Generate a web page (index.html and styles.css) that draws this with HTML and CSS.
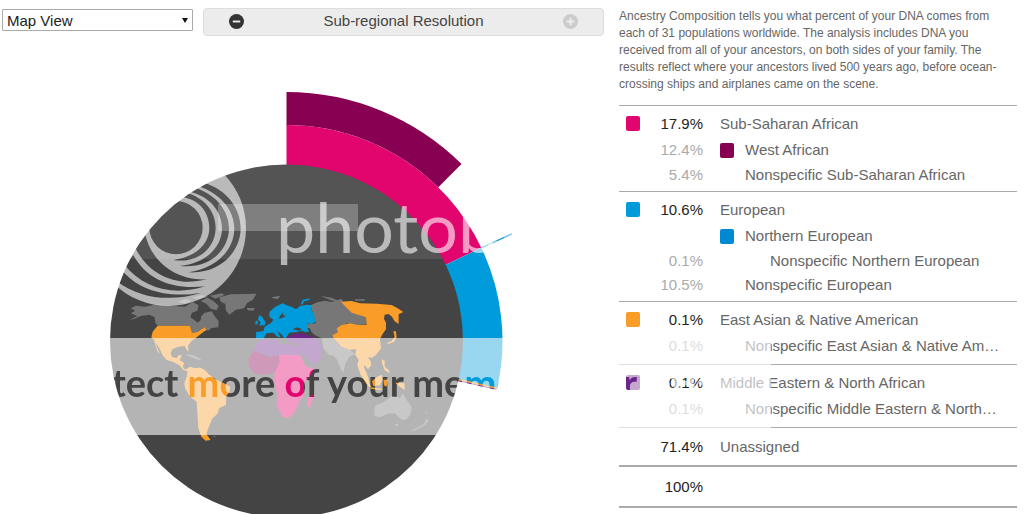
FILE: index.html
```html
<!DOCTYPE html>
<html lang="en">

<head>
    <meta charset="UTF-8">
    <meta name="viewport" content="width=device-width, initial-scale=1.0">
    <title>Ancestry Composition</title>
    <link rel="stylesheet" href="styles.css">
</head>

<body>
    <div class="page">
        <div class="chart">
            <div class="toolbar">
                <select class="view" aria-label="View">
                    <option>Map View</option>
                </select>
                <div class="resolution">
                    <button type="button" aria-label="Less detail">
                        <svg viewBox="0 0 16 16"><circle cx="8" cy="8" r="8" fill="#333" /><path d="M4 8h8" /></svg>
                    </button>
                    <span>Sub-regional Resolution</span>
                    <button type="button" aria-label="More detail" disabled>
                        <svg viewBox="0 0 16 16"><circle cx="8" cy="8" r="8" fill="#ccc" /><path d="M4 8h8M8 4v8" /></svg>
                    </button>
                </div>
            </div>

            <svg class="map" viewBox="0 36 604 478">
                <!-- ring -->
                <path fill="#e2056e" d="M286.500 125A216 216 0 0 1 481.300 247.700L445.200 265L286.500 341Z" />
                <path fill="#870052" d="M286.500 92A249 249 0 0 1 461.500 163.900L438.300 187.300A216 216 0 0 0 286.500 125Z" />
                <path fill="#009bdb" d="M481.300 247.700A216 216 0 0 1 497.300 388L286.500 341Z" />
                <path stroke="#1593d2" stroke-width="1.300" d="M481 248l30.500-14" />
                <path stroke="#99d3ef" stroke-width="1.300" d="M488 245l9-4M504 237.500l8-3.700" />
                <path stroke="#f99d28" stroke-width="1.500" d="M458 379.500l39 8.700" />
                <path stroke="#6b2488" stroke-width="1" d="M458 380.700l38.500 8.700" />
                <circle cx="286.500" cy="341" r="176.500" fill="#444" />

                <!-- world map -->
                <g transform="translate(110 280) scale(.3333)">
                    <g fill="#777">
                        <path d="M58 120L82 108 62 100 76 92 62 85 78 77 105 80 140 73 190 78 225 80 248 66 266 76 262 92 246 98 241 112 252 119 263 128 272 120 274 108 284 98 306 94 312 106 326 124 325 142 304 144 298 151 290 152 285 141 262 156 246 158 240 137 143 137 136 128 134 112 118 104 92 108 74 116Z" />
                        <path d="M205 65l22-8 18 5-20 9zM244 54l30-9 20 5-24 7zM272 63l20-10 18 10 16 14-6 14-18-5-12-14zM300 47l34-7 10 4-28 12z" />
                        <path d="M328 52L362 43 440 41 428 60 412 68 402 85 378 89 358 104 348 92 346 72 332 65ZM410 84l24 0-4 8-17-1zM484 52l28-5-10 11-12-3z" />
                        <path d="M602 76L622 67 645 62 665 66 695 56 706 80 725 96 768 112 770 132 745 135 712 130 686 140 684 155 670 165 670 175 640 176 615 166 604 155 600 145 588 144 592 132 618 130 610 105ZM632 48l32 5 22 9-20 0zM734 58l32 0-2 4-28 0z" />
                        <path d="M636 176L670 174 694 200 720 210 737 223 720 228 706 250 700 278 692 266 682 240 672 228 658 225 640 205Z" />
                        <path d="M792 406L795 378 822 366 845 348 864 350 870 356 878 340 892 362 905 382 902 402 890 418 876 420 854 400 832 402 808 412ZM854 432l12-1-5 9zM904 452l38-20 8-18 6 8-12 14-36 18zM940 392l14 8-3 2zM224 222l28 4 22 12-4 3-26-9zM308 468l10 1-4 3z" />
                    </g>
                    <g fill="#f99d28">
                        <path d="M143 137L240 137 246 158 262 156 285 141 289 150 275 160 258 173 244 184 234 197 236 215 229 208 224 198 205 200 188 207 182 218 185 230 200 235 205 226 216 226 209 241 222 248 219 262 226 269 240 260 254 264 272 263 284 270 298 284 320 300 342 310 361 320 358 336 349 348 348 375 328 384 322 402 308 414 300 432 294 447 289 462 302 480 287 482 274 470 265 445 263 410 260 365 240 350 225 325 223 310 230 290 233 274 220 270 208 256 190 246 170 240 158 226 148 205 138 188 142 204 150 222 142 214 132 180 124 172 128 155Z" />
                        <path d="M693 65L725 63 750 70 800 71 845 75 862 84 880 96 866 103 866 132 854 124 846 110 836 102 824 104 822 116 828 128 828 148 818 162 810 177 813 205 798 225 785 234 774 230 782 244 784 256 774 268 764 256 762 262 774 290 780 318 768 310 752 284 742 255 746 240 736 224 738 207 720 210 694 200 684 188 670 175 668 165 684 156 680 145 695 135 720 130 745 135 770 134 768 112 725 98 708 82Z" />
                        <path d="M830 190l16-8 8-12-4-16 8 0 2 18-8 14-18 6zM754 284l16 14 14 22-6 2zM786 304l16-14 14-6 2 14-8 18-20 2zM820 300l14-2-4 22-8-4zM855 308l28 2 2 20-16-10zM816 238l8 4 0 18 14 12 0 8-14-10-8-20zM782 322l34 4-4 4-30-4z" />
                    </g>
                    <g fill="#009bdb">
                        <path d="M464 140L484 128 490 119 478 110 478 96 496 80 518 70 530 76 544 80 558 88 570 78 592 74 604 76 604 88 612 104 616 126 604 132 592 130 590 142 598 154 588 157 574 152 560 156 538 158 532 168 524 176 514 162 502 154 512 172 504 172 490 158 470 160 460 176 438 176 438 156 460 154Z" />
                        <path d="M447 106l8 3 12 18-2 8-18 2 5-10-8-8zM437 122l7 0-1 10-7 3zM572 72l6-12 22-5-3 6-14 3-7 10z" />
                        <path fill="#444" d="M510 108l10-12-1 9 9 3-10 5-12 4zM548 148l12-6 16 5-8 5z" />
                    </g>
                    <path fill="#6b2488" d="M534 171L560 159 590 164 608 172 624 177 638 206 630 218 636 234 612 256 596 240 580 220 568 204 572 192 545 190 530 180ZM448 180L496 178 512 194 534 192 570 198 578 228 510 224 482 232 456 222 430 212Z" />
                    <path fill="#870052" d="M430 212L456 222 480 232 508 225 508 250 498 274 484 280 452 284 430 278 416 256 415 236Z" />
                    <path fill="#e2056e" d="M508 224L572 226 582 250 596 264 613 262 606 280 582 308 582 345 564 372 556 396 540 412 520 414 512 400 499 375 502 345 492 300 494 278 508 250ZM590 378l2-22 16-12 2 12-12 27z" />
                </g>
            </svg>
        </div>

        <div class="summary">
            <p>Ancestry Composition tells you what percent of your DNA comes from each of 31 populations worldwide. The analysis includes DNA you received from all of your ancestors, on both sides of your family. The results reflect where your ancestors lived 500 years ago, before ocean-crossing ships and airplanes came on the scene.</p>

            <table>
                <tbody>
                    <tr class="first">
                        <td class="key"><span class="swatch african"></span></td>
                        <td class="percent">17.9%</td>
                        <td>Sub-Saharan African</td>
                    </tr>
                    <tr class="sub">
                        <td></td>
                        <td class="percent">12.4%</td>
                        <td><span class="swatch west"></span>West African</td>
                    </tr>
                    <tr class="sub plain last">
                        <td></td>
                        <td class="percent">5.4%</td>
                        <td class="indent">Nonspecific Sub-Saharan African</td>
                    </tr>
                </tbody>
                <tbody>
                    <tr class="first">
                        <td class="key"><span class="swatch european"></span></td>
                        <td class="percent">10.6%</td>
                        <td>European</td>
                    </tr>
                    <tr class="sub">
                        <td></td>
                        <td class="percent"></td>
                        <td><span class="swatch northern"></span>Northern European</td>
                    </tr>
                    <tr class="sub plain">
                        <td></td>
                        <td class="percent">0.1%</td>
                        <td class="indent-more">Nonspecific Northern European</td>
                    </tr>
                    <tr class="sub plain last">
                        <td></td>
                        <td class="percent">10.5%</td>
                        <td class="indent">Nonspecific European</td>
                    </tr>
                </tbody>
                <tbody>
                    <tr class="first">
                        <td class="key"><span class="swatch asian"></span></td>
                        <td class="percent">0.1%</td>
                        <td>East Asian &amp; Native American</td>
                    </tr>
                    <tr class="sub last">
                        <td></td>
                        <td class="percent">0.1%</td>
                        <td class="indent">Nonspecific East Asian &amp; Native Am…</td>
                    </tr>
                </tbody>
                <tbody>
                    <tr class="first">
                        <td class="key"><span class="swatch eastern"></span></td>
                        <td class="percent">0.1%</td>
                        <td>Middle Eastern &amp; North African</td>
                    </tr>
                    <tr class="sub last">
                        <td></td>
                        <td class="percent">0.1%</td>
                        <td class="indent">Nonspecific Middle Eastern &amp; North…</td>
                    </tr>
                </tbody>
                <tbody>
                    <tr class="first last">
                        <td></td>
                        <td class="percent">71.4%</td>
                        <td>Unassigned</td>
                    </tr>
                </tbody>
                <tfoot>
                    <tr class="first last">
                        <td></td>
                        <td class="percent">100%</td>
                        <td></td>
                    </tr>
                </tfoot>
            </table>
        </div>

        <!-- translucent watermark over everything -->
        <svg class="watermark" viewBox="0 0 1024 514">
            <defs>
                <mask id="slogan">
                    <rect y="338" width="771" height="97" fill="#fff" />
                    <text class="slogan" x="55" y="397">protect more of your memories for less!</text>
                </mask>
                <mask id="rings" maskUnits="userSpaceOnUse" x="80" y="140" width="180" height="180">
                    <g transform="translate(110 165) scale(.3333)">
                        <circle cx="175" cy="190" r="233" fill="#fff" />
                        <circle cx="198" cy="188" r="80" />
                        <path d="M215 96C270 103 298 145 298 188C298 235 260 275 190 285C262 297 317 250 317 188C317 145 290 102 232 84Z" />
                        <path d="M242 81C300 95 336 140 336 190C336 245 290 295 210 303C300 312 357 255 357 190C357 140 320 87 254 68Z" />
                        <path d="M266 64C330 85 373 135 373 190C373 255 320 310 235 322C330 328 392 260 392 190C392 130 350 72 280 53Z" />
                        <path d="M104 200C120 290 200 348 290 343C190 370 110 320 76 248Z" />
                        <path d="M70 270C110 345 190 375 285 364C190 395 100 370 44 300Z" />
                        <path d="M38 318C90 380 180 400 275 383C180 412 90 400 22 350Z" />
                    </g>
                </mask>
                <clipPath id="globe">
                    <circle cx="286.500" cy="341" r="176.500" />
                </clipPath>
            </defs>
            <g fill="#fff">
                <g clip-path="url(#globe)">
                    <rect x="100" y="160" width="380" height="99" opacity=".09" />
                </g>
                <rect x="218" y="204" width="140" height="27" opacity=".25" />
                <rect x="80" y="140" width="180" height="180" opacity=".6" mask="url(#rings)" />
                <text class="brand" x="276" y="253" opacity=".6">photob</text>
                <rect y="338" width="771" height="97" opacity=".6" mask="url(#slogan)" />
            </g>
        </svg>
    </div>
</body>

</html>
```
FILE: styles.css
```css
* {
    margin: 0;
    padding: 0;
    box-sizing: border-box;
    font-family: "Liberation Sans", Arial, sans-serif;
}

body {
    background-color: #fff;
    color: #666;
}

.page {
    position: relative;
    display: grid;
    grid-template-columns: 604fr 398fr;
    column-gap: 15px;
    padding-right: 7px;
    align-items: start;
}

.toolbar {
    position: relative;
    display: flex;
    align-items: flex-start;
    gap: 10px;
    height: 36px;
    padding: 8px 0 0 2px;
}

.toolbar::before {
    content: "";
    position: absolute;
    left: 182px;
    top: 18px;
    border: 3px solid transparent;
    border-top: 5px solid #111;
    border-bottom: none;
}

.view {
    width: 191px;
    height: 22px;
    margin-top: 1px;
    padding-left: 4px;
    appearance: none;
    border: 1px solid #aaa;
    border-radius: 1px;
    background: none;
    color: #222;
    font-size: 15px;
}

.resolution {
    flex: 1;
    display: flex;
    align-items: center;
    justify-content: space-between;
    height: 28px;
    padding: 0 25px;
    border: 1px solid #ddd;
    border-radius: 4px;
    background-color: #ececec;
    color: #444;
    font-size: 15px;
    line-height: 18px;
}

.resolution span {
    padding-bottom: 2px;
}

.resolution button {
    width: 15px;
    height: 15px;
    margin-bottom: 2px;
    border: none;
    background: none;
}

.resolution svg {
    display: block;
    width: 100%;
    stroke: #eee;
    stroke-width: 2;
}

.resolution circle {
    stroke: none;
}

.map {
    display: block;
    width: 100%;
}

.summary p {
    padding: 8px 6px 12px 0;
    font-size: 12px;
    line-height: 17px;
}

table {
    width: 100%;
    border-collapse: collapse;
    font-size: 15px;
    line-height: 18px;
}

tbody {
    border-top: 1px solid #aaa;
}

tfoot {
    border-top: 2px solid #aaa;
    border-bottom: 2px solid #aaa;
}

td {
    height: 26px;
    padding-left: 17px;
    white-space: nowrap;
}

.plain td {
    height: 24px;
}

.first td {
    height: 31px;
    padding-top: 5px;
}

.last td {
    height: 32px;
    padding-bottom: 4px;
}

.plain.last td {
    height: 29px;
}

.first.last td {
    height: 38px;
}

tfoot .first.last td {
    height: 41px;
}

td:first-child {
    width: 28px;
    padding-left: 7px;
}

td.percent {
    width: 56px;
    padding-left: 0;
    text-align: right;
    color: #222;
}

.sub td.percent {
    color: #aaa;
}

td.indent {
    padding-left: 42px;
}

td.indent-more {
    padding-left: 67px;
}

.swatch {
    display: inline-block;
    width: 14px;
    height: 15px;
    margin-right: 11px;
    border-radius: 2px;
    vertical-align: middle;
}

.key .swatch {
    display: block;
    margin-right: 0;
}

.african {
    background-color: #e2056e;
}

.west {
    background-color: #870052;
}

.european {
    background-color: #009bdb;
}

.northern {
    background-color: #0089d0;
}

.asian {
    background-color: #f99d28;
}

.eastern {
    background-color: #6b2488;
}

.watermark {
    position: absolute;
    top: 0;
    left: 0;
    width: 100%;
    pointer-events: none;
}

.brand {
    font-family: Lato, sans-serif;
    font-size: 70px;
}

.slogan {
    font-family: Lato, sans-serif;
    font-size: 38px;
    font-weight: 700;
}
```
